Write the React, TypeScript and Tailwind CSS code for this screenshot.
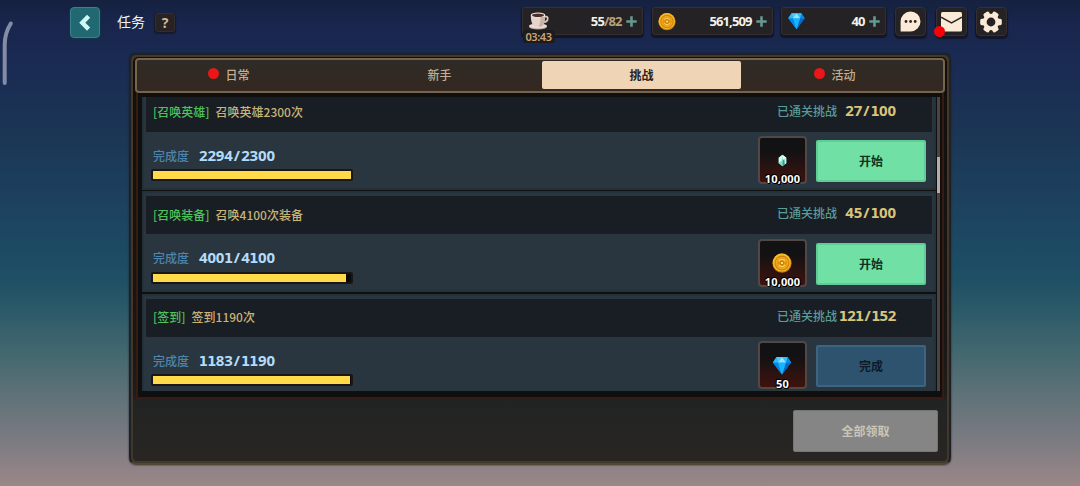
import type { ReactNode } from "react";

type Reward = "emerald" | "coin" | "gem";

interface Quest {
  tag: string;
  title: string;
  cleared: [number, number];
  progress: [number, number];
  fill: number;
  reward: Reward;
  amount: string;
  done: boolean;
}

const quests: Quest[] = [
  { tag: "召唤英雄", title: "召唤英雄2300次", cleared: [27, 100], progress: [2294, 2300], fill: 100, reward: "emerald", amount: "10,000", done: false },
  { tag: "召唤装备", title: "召唤4100次装备", cleared: [45, 100], progress: [4001, 4100], fill: 97.6, reward: "coin", amount: "10,000", done: false },
  { tag: "签到", title: "签到1190次", cleared: [121, 152], progress: [1183, 1190], fill: 99.4, reward: "gem", amount: "50", done: true },
];

const tabs = [
  { label: "日常", dot: true, active: false },
  { label: "新手", dot: false, active: false },
  { label: "挑战", dot: false, active: true },
  { label: "活动", dot: true, active: false },
];

function Coin({ className }: { className: string }) {
  return (
    <svg viewBox="0 0 20 20" className={className}>
      <circle cx="10" cy="10.2" r="9.6" fill="#c87908" />
      <circle cx="9.8" cy="9.6" r="9" fill="#f5bd2a" />
      <circle cx="10" cy="10" r="6.9" fill="#f0a91c" stroke="#ce820e" strokeWidth="1.2" />
      <path d="M10 4.8l3.6 1.6 1.6 3.6-1.6 3.6-3.6 1.6-3.6-1.6L4.8 10l1.6-3.6z" fill="#e4960f" />
      <path d="M7 8.2q.8-1.9 3-1.9t3 1.9M7 11.8q.8 1.9 3 1.9t3-1.9" fill="none" stroke="#ffd95a" strokeWidth="1.1" />
      <circle cx="10" cy="10" r="1.8" fill="#ffe06a" stroke="#b96f09" strokeWidth=".9" />
    </svg>
  );
}

function Gem({ className }: { className: string }) {
  return (
    <svg viewBox="0 0 20 20" className={className}>
      <path d="M4.2 1h11.6L19.6 6.8 10 19.6.4 6.8z" fill="#079af5" />
      <path d="M.4 6.8h5.4L10 19.6z" fill="#0784ea" />
      <path d="M19.6 6.8h-5.4L10 19.6z" fill="#0567c6" />
      <path d="M5.8 6.8h8.4L10 19.6z" fill="#18b5ff" />
      <path d="M4.2 1 .4 6.8h5.4z" fill="#35b8fb" />
      <path d="M15.8 1l3.8 5.8h-5.4z" fill="#0a86e6" />
      <path d="M4.2 1H10L5.8 6.8z" fill="#4cc9ff" />
      <path d="M10 1h5.8l-1.6 5.8z" fill="#2fc0ff" />
      <path d="M10 1 5.8 6.8h8.4z" fill="#8fe8ff" />
    </svg>
  );
}

function Emerald() {
  return (
    <svg viewBox="0 0 10 14" className="h-[13px] w-[9px]">
      <path d="M5 .5 9.2 4v6L5 13.5.8 10V4z" fill="#8fe3d2" />
      <path d="M5 .5.8 4v6L4 7.5z" fill="#d5fff2" />
      <path d="M5 .5 9.2 4 5.5 6z" fill="#effff9" />
      <path d="M9.2 4v6l-1.8 1.5L7 6z" fill="#c3f5e8" />
      <path d="M7 6l.4 5.5L5 13.5 5.2 7z" fill="#2f9c8e" />
      <path d="M.8 10 4 7.5l1 6z" fill="#7fd8c6" />
    </svg>
  );
}

function Cup() {
  return (
    <svg viewBox="0 0 20 18" className="h-[18px] w-[20px]">
      <ellipse cx="9" cy="14.8" rx="9" ry="2.8" fill="#b79f97" />
      <ellipse cx="9" cy="14" rx="9" ry="2.6" fill="#eadbd4" />
      <path d="M15.5 4.6h1.7q1.700 0 1.500 2.200-.3 3-4.200 3.600" fill="none" stroke="#d9c4bb" strokeWidth="1.8" />
      <path d="M1.8 3h14.400q0 8.800-3.200 11.500H5Q1.800 11.800 1.800 3z" fill="#e6d3ca" />
      <path d="M11.5 5h4.600q-.3 7-3.100 9.500h-3.500q2-3 2-9.500z" fill="#c9b1a8" />
      <ellipse cx="9" cy="3" rx="7.2" ry="2.4" fill="#f6ebe5" />
      <ellipse cx="9" cy="3.2" rx="6" ry="1.7" fill="#4b2d25" />
    </svg>
  );
}

function Gear() {
  return (
    <svg viewBox="-11 -11 22 22" className="h-[22px] w-[22px]">
      <g fill="#fbead6">
        <circle r="8.3" />
        {[0, 60, 120, 180, 240, 300].map((angle) => (
          <rect key={angle} x="5" y="-3.2" width="5.8" height="6.4" rx="1.6" transform={`rotate(${angle})`} />
        ))}
      </g>
      <circle r="4.4" fill="#242225" />
    </svg>
  );
}

function Plus() {
  return (
    <svg viewBox="0 0 11 11" className="h-[11px] w-[11px] shrink-0">
      <path d="M5.5.3v10.4M.3 5.5h10.4" stroke="#67988f" strokeWidth="2.6" />
    </svg>
  );
}

function Resource({ icon, children, className }: { icon: ReactNode; children: ReactNode; className: string }) {
  return (
    <div
      className={`relative flex h-[28px] shrink-0 items-center justify-between rounded-[3px] border border-[#35302f] bg-[#242225] pr-[5px] shadow-[0_2px_1px_1px_#131626] ${className}`}
    >
      {icon}
      <div className="flex items-center gap-[4px]">
        <span className="font-['Noto_Sans','Liberation_Sans',sans-serif] text-[13px] font-bold leading-none tracking-[-0.9px] text-[#f5f1e8]">
          {children}
        </span>
        <Plus />
      </div>
    </div>
  );
}

function IconButton({ children, className }: { children: ReactNode; className: string }) {
  return (
    <div
      className={`relative flex h-[29px] w-[31px] shrink-0 items-center justify-center rounded-[4px] border border-[#35302f] bg-[#242225] shadow-[0_2px_1px_1px_#131626] ${className}`}
    >
      {children}
    </div>
  );
}

function Ratio({ value, tight = false, className }: { value: [number, number]; tight?: boolean; className: string }) {
  return (
    <span className={`flex h-[16px] items-baseline font-bold leading-[16px] ${className}`}>
      {value.join("/").split("").map((char, index) => (
        <span
          key={index}
          className={`flex shrink-0 justify-center ${tight ? "w-[8.1px]" : "w-[8.45px]"} ${
            char === "1"
              ? "font-['DejaVu_Sans_Condensed','DejaVu_Sans',sans-serif] text-[14.5px] [font-stretch:condensed]"
              : "font-['Noto_Sans','Liberation_Sans',sans-serif] text-[15px]"
          }`}
        >
          {char}
        </span>
      ))}
    </span>
  );
}

function RewardBox({ kind, amount }: { kind: Reward; amount: string }) {
  return (
    <div className="relative flex h-[48px] w-[49px] shrink-0 items-center justify-center rounded-[4px] border-2 border-[#514845] bg-linear-to-b from-[#121113] from-30% to-[#3f110d] pr-px">
      {kind === "emerald" && <Emerald />}
      {kind === "coin" && <Coin className="h-[20px] w-[20px]" />}
      {kind === "gem" && <Gem className="h-[19px] w-[20px]" />}
      <span className="absolute inset-x-[-4px] bottom-[-3px] text-center font-['Noto_Sans','Liberation_Sans',sans-serif] text-[11px] font-bold leading-[13px] tracking-[0.15px] text-white [text-shadow:1px_0_#000,-1px_0_#000,0_1px_#000,0_-1px_#000,1px_1px_#000,-1px_-1px_#000]">
        {amount}
      </span>
    </div>
  );
}

function QuestRow({ quest }: { quest: Quest }) {
  return (
    <div className="h-[101px] shrink-0 border-2 border-[#23313a] bg-[#29363f] px-[2px] pt-[3px]">
      <div className="flex h-[38px] items-center justify-between bg-[#181e24] pl-[7px] pr-[36px]">
        <div className="flex items-center gap-[6px] pb-px text-[12px] font-medium leading-none">
          <span className="text-[#4fc25c]">[{quest.tag}]</span>
          <span className="text-[#c9b377]">{quest.title}</span>
        </div>
        <div className="flex items-center pb-[4px] text-[12px] font-medium leading-none text-[#5b9c9a]">
          <span>已通关挑战</span>
          <Ratio
            value={quest.cleared}
            tight={quest.cleared[0] > 99}
            className="mt-[-2px] w-[59px] justify-end text-[#d9c47c]"
          />
        </div>
      </div>
      <div className="flex justify-between pl-[5px] pr-[6px]">
        <div className="pt-[16px]">
          <div className="flex h-[16px] items-center gap-[10px] pl-[2px]">
            <span className="text-[12px] font-medium leading-none text-[#4d85b0]">完成度</span>
            <Ratio value={quest.progress} className="mt-[-2px] text-[#b3dbfa]" />
          </div>
          <div className="mt-[5.5px] h-[12px] w-[202px] rounded-[2px] border-2 border-[#1b1714] bg-[#0c0906]">
            <div className="h-full bg-[#ffdb4b]" style={{ width: `${quest.fill}%` }} />
          </div>
        </div>
        <div className="flex gap-[9px] pt-[4.5px]">
          <RewardBox kind={quest.reward} amount={quest.amount} />
          <button
            className={`mt-[4px] h-[42px] w-[110px] rounded-[2px] border-2 text-[12px] font-bold leading-none ${
              quest.done
                ? "border-[#3d6480] bg-[#2d536f] text-[#0d1b28]"
                : "border-[#62cc96] bg-[#70e0a4] text-[#0d3022]"
            }`}
          >
            {quest.done ? "完成" : "开始"}
          </button>
        </div>
      </div>
    </div>
  );
}

export default function App() {
  return (
    <div className="relative flex h-[486px] w-[1080px] flex-col overflow-hidden bg-[linear-gradient(180deg,#15213f_0px,#19254c_22px,#1a2b53_65px,#1b3454_125px,#1c3f5d_190px,#1c4963_245px,#1e5064_280px,#2a5968_308px,#44686f_355px,#627379_400px,#777a80_435px,#8f8286_468px,#9a8787_486px)] font-['Noto_Sans_CJK_SC',sans-serif]">
      <svg viewBox="0 0 16 90" className="absolute left-0 top-0 h-[90px] w-[16px]">
        <path d="M10.8 23.5Q4.7 33 4.7 45v38" fill="none" stroke="#848ba5" strokeWidth="4" strokeLinecap="round" />
      </svg>

      <header className="flex h-[53px] shrink-0 items-start pl-[70px] pr-[73.5px] pt-[7px]">
        <button className="flex h-[31px] w-[30px] items-center justify-center rounded-[4px] border border-[#3b8188] bg-[#216873] shadow-[0_1px_1px_1px_#123447]">
          <svg viewBox="0 0 12 18" className="h-[18px] w-[12px]">
            <path d="M9.6 2.3 3.3 8.7l6.3 6.4" fill="none" stroke="#cff7f4" strokeWidth="4.4" />
          </svg>
        </button>
        <h1 className="ml-[17px] text-[14px] leading-[28px] text-[#f0f3ee]">任务</h1>
        <span className="ml-[10px] mt-[6px] flex h-[19px] w-[20px] items-center justify-center rounded-[3px] border border-[#342d2d] bg-[#272223] font-['Noto_Sans',sans-serif] text-[14px] font-bold leading-none text-[#d3b793] shadow-[0_1px_1px_1px_#171a2a]">
          ?
        </span>

        <div className="ml-auto flex">
          <Resource className="w-[121px] pl-[6px]" icon={<Cup />}>
            55<span className="text-[#b8a078]">/82</span>
            <span className="absolute left-0 top-[22px] flex h-[13px] w-[32px] items-center justify-center rounded-[2px] bg-[#1e1b1f] text-[11px] font-semibold tracking-[-0.4px] text-[#c8a572]">
              03:43
            </span>
          </Resource>
          <Resource className="ml-[9px] w-[121px] pl-[5px]" icon={<Coin className="h-[19px] w-[18px]" />}>
            561,509
          </Resource>
          <Resource className="ml-[8px] w-[105px] pl-[6px]" icon={<Gem className="h-[18px] w-[17px]" />}>
            40
          </Resource>
          <IconButton className="ml-[9px]">
            <svg viewBox="0 0 21 21" className="h-[21px] w-[21px]">
              <path d="M10.5.4A10 10 0 1 1 10.5 20.4H.6V10.5A10 10 0 0 1 10.5.4z" fill="#fbead6" />
              <circle cx="6" cy="10.5" r="1.4" fill="#2a2526" />
              <circle cx="10.6" cy="10.5" r="1.4" fill="#2a2526" />
              <circle cx="15.2" cy="10.5" r="1.4" fill="#2a2526" />
            </svg>
          </IconButton>
          <IconButton className="ml-[10px]">
            <svg viewBox="0 0 21 20" className="h-[20px] w-[21px]">
              <rect width="21" height="19.5" rx="1.5" fill="#fbead6" />
              <path d="M0 5.2 10.5 11 21 5.2" fill="none" stroke="#2a2526" strokeWidth="1.5" />
            </svg>
            <span className="absolute left-[-3px] top-[18px] h-[11px] w-[11px] rounded-full bg-[#fb0007]" />
          </IconButton>
          <IconButton className="ml-[9px]">
            <Gear />
          </IconButton>
        </div>
      </header>

      <main className="ml-[129px] flex h-[412px] w-[822px] shrink-0 flex-col rounded-[7px] border-2 border-[#1e2228] border-b-[#4f4636] bg-linear-to-b from-[#443829] to-[#40382b] p-[2px] shadow-[0_0_2px_0_#1c2028]">
        <div className="flex min-h-0 flex-1 flex-col rounded-[5px] bg-linear-to-b from-[#120e0c] via-[#191614] via-70% to-[#282623] px-[2px] pt-[1px]">
          <nav className="flex h-[35px] shrink-0 items-start gap-[3px] rounded-[4px] border-2 border-[#77644f] bg-linear-to-b from-[#2f2b26] to-[#342820] px-[1px] pt-[1px]">
            {tabs.map((tab) => (
              <div
                key={tab.label}
                className={`flex h-[28px] w-[199px] shrink-0 items-center justify-center rounded-[2px] pb-px text-[12px] leading-none ${
                  tab.active ? "bg-[#efd5b5] font-bold text-[#29211c]" : "font-medium text-[#c3ae93]"
                }`}
              >
                <span className="relative">
                  {tab.label}
                  {tab.dot && (
                    <span className="absolute left-[-17px] top-[-1px] h-[11px] w-[11px] rounded-full bg-[#ec1518]" />
                  )}
                </span>
              </div>
            ))}
          </nav>

          <section className="mx-px flex h-[306px] shrink-0 border-x-2 border-b-2 border-[#341c15] bg-[#100f10] pb-[6px] pl-[4px] pr-[2px] pt-[4px]">
            <div className="min-w-0 flex-1 overflow-hidden">
              <div className="mt-[-8.5px] flex flex-col gap-[1.5px]">
                {quests.map((quest) => (
                  <QuestRow key={quest.tag} quest={quest} />
                ))}
              </div>
            </div>
            <div className="ml-px w-[3px] shrink-0 bg-[#4b4440] pt-[60px]">
              <div className="h-[36px] w-[3px] bg-[#b9aca6]" />
            </div>
          </section>

          <footer className="-mx-[2px] flex flex-1 justify-end rounded-b-[4px] bg-linear-to-b from-[#212323] to-[#292622] pr-[9px] pt-[11px]">
            <button className="h-[42px] w-[145px] rounded-[2px] border border-[#747474] bg-[#858585] text-[12px] font-bold leading-none text-[#c9c5b8]">
              全部领取
            </button>
          </footer>
        </div>
      </main>
    </div>
  );
}
